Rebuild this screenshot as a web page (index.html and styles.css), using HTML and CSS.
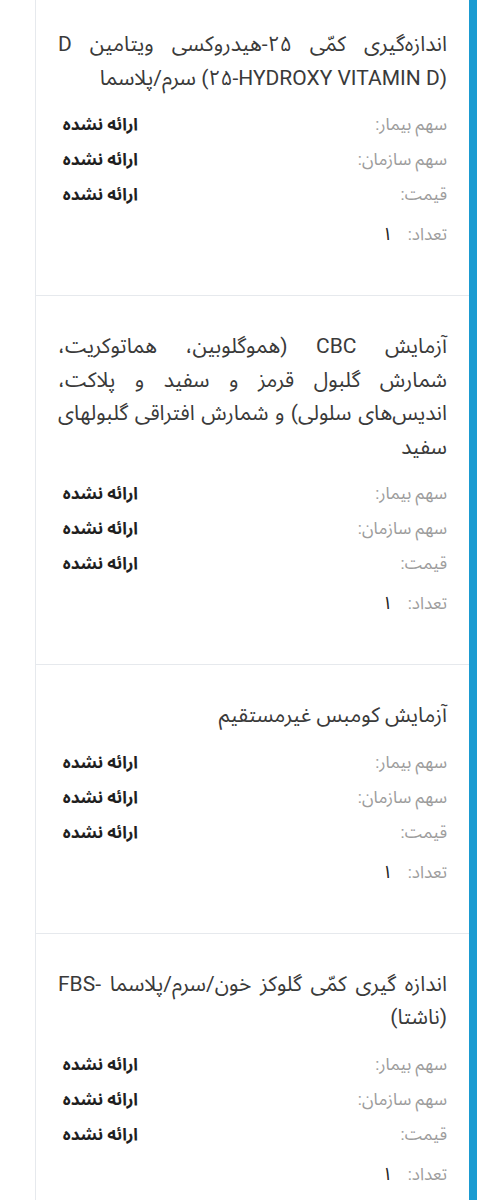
FILE: index.html
```html
<!DOCTYPE html>
<html lang="fa" dir="rtl">
<head>
	<meta charset="UTF-8">
	<title>لیست خدمات</title>
	<link rel="stylesheet" href="styles.css">
</head>
<body>
	<div class="list">
		<div class="item">
			<p class="item-title">اندازه‌گیری کمّی ۲۵-هیدروکسی ویتامین D <span class="en">(۲۵-HYDROXY VITAMIN D)</span> سرم/پلاسما</p>
			<div class="row"><span class="label">سهم بیمار:</span><span class="value">ارائه نشده</span></div>
			<div class="row"><span class="label">سهم سازمان:</span><span class="value">ارائه نشده</span></div>
			<div class="row"><span class="label">قیمت:</span><span class="value">ارائه نشده</span></div>
			<div class="count"><span class="label">تعداد:</span> <span class="num">۱</span></div>
		</div>
		<div class="item">
			<p class="item-title">آزمایش CBC (هموگلوبین، هماتوکریت، شمارش گلبول قرمز و سفید و پلاکت، اندیس‌های سلولی) و شمارش افتراقی گلبولهای سفید</p>
			<div class="row"><span class="label">سهم بیمار:</span><span class="value">ارائه نشده</span></div>
			<div class="row"><span class="label">سهم سازمان:</span><span class="value">ارائه نشده</span></div>
			<div class="row"><span class="label">قیمت:</span><span class="value">ارائه نشده</span></div>
			<div class="count"><span class="label">تعداد:</span> <span class="num">۱</span></div>
		</div>
		<div class="item">
			<p class="item-title">آزمایش کومبس غیرمستقیم</p>
			<div class="row"><span class="label">سهم بیمار:</span><span class="value">ارائه نشده</span></div>
			<div class="row"><span class="label">سهم سازمان:</span><span class="value">ارائه نشده</span></div>
			<div class="row"><span class="label">قیمت:</span><span class="value">ارائه نشده</span></div>
			<div class="count"><span class="label">تعداد:</span> <span class="num">۱</span></div>
		</div>
		<div class="item">
			<p class="item-title">اندازه گیری کمّی گلوکز خون/سرم/پلاسما -FBS (ناشتا)</p>
			<div class="row"><span class="label">سهم بیمار:</span><span class="value">ارائه نشده</span></div>
			<div class="row"><span class="label">سهم سازمان:</span><span class="value">ارائه نشده</span></div>
			<div class="row"><span class="label">قیمت:</span><span class="value">ارائه نشده</span></div>
			<div class="count"><span class="label">تعداد:</span> <span class="num">۱</span></div>
		</div>
	</div>
</body>
</html>
```

FILE: styles.css
```css
*{
	margin: 0;
	padding: 0;
	box-sizing: border-box;
}
body{
	background: #fff;
	font-family: Roboto, "Noto Sans Arabic", "DejaVu Sans", sans-serif;
	color: #333;
}
.list{
	margin-left: 35px;
	border-left: 1px solid #e6e9ed;
	border-right: 8px solid #1b9bd1;
}
.item{
	padding: 34px 22px 44px 22px;
	border-top: 1px solid #e6e9ed;
}
.item:first-child{
	padding-top: 28px;
	border-top: none;
}
.item-title{
	font-size: 21px;
	line-height: 33.5px;
	text-align: justify;
	color: #3a3a3a;
	margin-bottom: 12px;
}
.en{
	white-space: nowrap;
}
.row{
	display: grid;
	grid-template-columns: 1fr 80px;
	height: 35px;
	line-height: 35px;
	font-size: 17px;
}
.label{
	color: #9c9c9c;
}
.value{
	color: #1f1f1f;
	font-weight: bold;
}
.count{
	margin-top: 4px;
	height: 35px;
	line-height: 35px;
	font-size: 17px;
}
.num{
	color: #222;
	font-size: 18px;
	margin-right: 11px;
}
```
